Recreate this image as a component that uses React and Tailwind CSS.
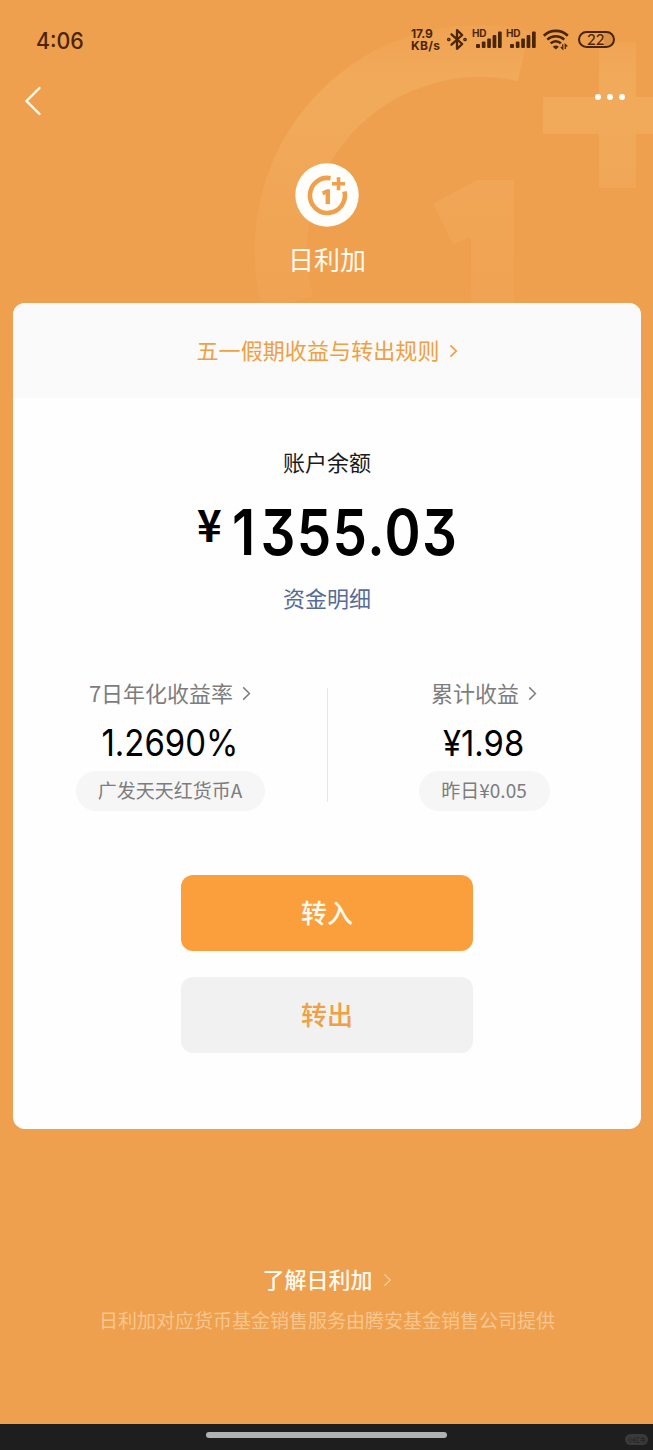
import React from "react";

function Chevron({ className }) {
  return (
    <svg viewBox="0 0 9 16" fill="none" stroke="currentColor" className={className}>
      <path d="M1 1.5L7.6 8L1 14.5" />
    </svg>
  );
}

function Signal() {
  return (
    <div className="relative h-6 w-[30px]">
      <span className="absolute top-[1px] left-[-1px] font-['Inter'] text-[10px] leading-[11px] font-bold tracking-[-0.3px]">
        HD
      </span>
      <svg viewBox="0 0 30 24" className="h-6 w-[30px]" fill="currentColor">
        <rect x="3" y="17" width="4" height="4" rx="1" />
        <rect x="8.8" y="14.5" width="3.7" height="6.5" rx="1" />
        <rect x="14.2" y="11.5" width="3.7" height="9.5" rx="1" />
        <rect x="19.6" y="8" width="3.7" height="13" rx="1" />
        <rect x="25" y="4.5" width="3.7" height="16.5" rx="1" />
      </svg>
    </div>
  );
}

function StatusBar() {
  return (
    <div className="flex h-[51px] items-end justify-between pr-[38px] pl-[36px] text-[#4a2508]">
      <span className="mb-[-3px] origin-left scale-x-[0.95] font-['Inter'] text-[22.5px] leading-[26px] font-medium">
        4:06
      </span>

      <div className="flex h-6 items-center">
        <div className="mt-[2px] w-[36px] font-['Inter'] text-[12px] leading-[12px] font-bold">
          <p className="tracking-[-0.2px]">17.9</p>
          <p className="tracking-[0.3px]">KB/s</p>
        </div>

        {/* Bluetooth */}
        <svg
          viewBox="0 0 20 24"
          className="h-6 w-5"
          fill="none"
          stroke="currentColor"
          strokeWidth="2.3"
          strokeLinejoin="round"
          strokeLinecap="round"
        >
          <path d="M4.5 7.3L15.2 17L10 21.8V3.2L15.2 8L4.5 17.7" />
          <circle cx="1.8" cy="12.5" r="0.7" />
          <circle cx="18" cy="12.5" r="0.7" />
        </svg>

        <div className="ml-[6px] flex gap-[4px]">
          <Signal />
          <Signal />
        </div>

        {/* Wi-Fi */}
        <svg viewBox="0 0 28 24" className="ml-[5px] h-6 w-7" fill="none" stroke="currentColor" strokeWidth="2.6">
          <path d="M1.8 8.7C8.4 2.3 19.2 2.3 25.8 8.7" />
          <path d="M5.3 12.6C10.1 8.1 17.5 8.1 22.3 12.6" />
          <path d="M8.7 16.4C11.6 13.5 16 13.5 18.9 16.4" />
          <path d="M10.7 19.7Q13.8 17.3 16.9 19.7L13.8 22.5Z" fill="currentColor" stroke="none" />
          <path d="M20.8 17.3V22L18.8 20M23.3 22V17.5L25.3 19.5" strokeWidth="1.3" />
        </svg>

        <div className="ml-[8px] flex h-[17px] w-[37px] items-center rounded-full border-2 border-current bg-[linear-gradient(90deg,transparent_72%,#dc9048_72%)] pl-[7px] font-['Lato'] text-[15px] leading-none font-medium">
          22
        </div>
      </div>
    </div>
  );
}

function Watermark() {
  return (
    <svg viewBox="0 0 653 303" className="absolute top-0 left-0 h-[303px] w-[653px]">
      <defs>
        <linearGradient id="fade" x1="0" y1="0" x2="0" y2="303" gradientUnits="userSpaceOnUse">
          <stop offset="0" stopColor="#f3b266" stopOpacity="0" />
          <stop offset="0.25" stopColor="#f3b266" stopOpacity="0.5" />
          <stop offset="0.4" stopColor="#f3b266" stopOpacity="0.5" />
          <stop offset="0.7" stopColor="#f3b266" stopOpacity="0.3" />
          <stop offset="1" stopColor="#f3b266" stopOpacity="0.2" />
        </linearGradient>
      </defs>
      <path
        d="M523.5 55.8A199 199 0 0 0 288 303"
        fill="none"
        stroke="url(#fade)"
        strokeWidth="52"
      />
      <path d="M599 42H636V97H653V134H636V188H599V134H543V97H599Z" fill="url(#fade)" />
      <path d="M477 180H514V303H471V237L453 244L433 204Z" fill="url(#fade)" />
    </svg>
  );
}

function Logo() {
  return (
    <svg viewBox="0 0 64 64" className="h-16 w-16">
      <circle cx="32" cy="32" r="31.7" fill="#fffefa" />
      <g fill="none" stroke="#efa04c">
        <path d="M35.5 15.2A17.5 17.5 0 1 0 49.5 28.6" strokeWidth="4.6" />
        <path d="M43.5 14.3V27.3M37 20.8H50" strokeWidth="3.6" />
      </g>
      <path d="M31.8 26.2H35V41H30.6V31.3L28.2 32.2L27 28.6Z" fill="#efa04c" />
    </svg>
  );
}

function Stat({ label, value, note, valueClass, noteClass }) {
  return (
    <div className="flex w-[314px] flex-col items-center">
      <div className="flex h-[30px] items-center text-[22px] text-[#7d7d7d]">
        <span className="-mt-[2px]">{label}</span>
        <Chevron className="ml-[9px] h-[15px] w-[9px] stroke-[1.6]" />
      </div>
      <p className={`mt-[13px] font-['Inter'] leading-[44px] whitespace-nowrap text-black ${valueClass}`}>{value}</p>
      <span className={`mt-[6px] flex h-10 items-center justify-center rounded-full bg-[#f6f6f6] pb-px text-[19px] text-[#7d7d7d] ${noteClass}`}>
        {note}
      </span>
    </div>
  );
}

function App() {
  return (
    <div className="relative flex h-[1450px] w-[653px] flex-col overflow-hidden bg-[#efa04e] font-['Noto_Sans_CJK_SC',sans-serif]">
      <Watermark />

      <div className="relative flex grow flex-col">
        <StatusBar />

        {/* Nav */}
        <div className="mt-px flex h-[98px] items-center justify-between pr-[28px] pl-[24px] text-[#fffaf0]">
          <svg viewBox="0 0 18 30" className="h-[30px] w-[18px]" fill="none" stroke="currentColor" strokeWidth="2.4" strokeLinecap="round">
            <path d="M15.5 2L2.5 15L15.5 28" />
          </svg>
          <div className="mb-[8px] flex gap-[6px]">
            <span className="h-[6px] w-[6px] rounded-full bg-white" />
            <span className="h-[6px] w-[6px] rounded-full bg-white" />
            <span className="h-[6px] w-[6px] rounded-full bg-white" />
          </div>
        </div>

        {/* Product */}
        <div className="mt-[13px] flex flex-col items-center pl-px">
          <Logo />
          <h1 className="mt-[12px] mb-px text-[26px] leading-[40px] text-[#fffaf0]">日利加</h1>
        </div>

        {/* Card */}
        <div className="mt-[23px] ml-[13px] flex h-[826px] w-[628px] flex-col items-center overflow-hidden rounded-xl bg-[#fefefe]">
          <div className="flex h-[95px] w-full items-center justify-center bg-[#fafafa] text-[22px] text-[#efa044]">
            <span className="-mt-[3px] tracking-[0.1px]">五一假期收益与转出规则</span>
            <Chevron className="ml-[9px] h-[14px] w-[9px] stroke-2" />
          </div>

          <p className="mt-[47px] text-[22px] leading-[32px] text-[#1a1a1a]">账户余额</p>

          <div className="mt-[18px] flex h-[72px] w-[260px] items-start text-black">
            <span className="mt-[8px] w-[35px] shrink-0 text-[44px] leading-[40px] font-bold">
              <span className="block origin-left scale-x-[0.95]">¥</span>
            </span>
            <span className="origin-left scale-x-[0.87] font-['Inter'] text-[63px] leading-[74px] font-semibold tracking-[1.6px] [font-feature-settings:'cv09']">
              <span className="tracking-[6px]">1</span>355.03
            </span>
          </div>

          <p className="mt-[14px] text-[22px] leading-[32px] text-[#576b95]">资金明细</p>

          <div className="mt-[65px] flex items-start">
            <Stat
              label="7日年化收益率"
              value="1.2690%"
              note="广发天天红货币A"
              valueClass="text-[37px] scale-x-[0.89]"
              noteClass="w-[189px]"
            />
            <div className="mt-[10px] -mr-px h-[114px] w-px bg-[#e8e8e8]" />
            <Stat
              label="累计收益"
              value="¥1.98"
              note="昨日¥0.05"
              valueClass="text-[36px] scale-x-[0.91]"
              noteClass="w-[131px]"
            />
          </div>

          <button className="mt-[64px] h-[76px] w-[292px] rounded-xl bg-[#fa9f3b] pb-[4px] text-[26px] font-medium text-[#fffaf0]">
            转入
          </button>
          <button className="mt-[26px] h-[76px] w-[292px] rounded-xl bg-[#f1f1f1] pb-[4px] text-[26px] font-medium text-[#efa044]">
            转出
          </button>
        </div>

        {/* Footer */}
        <div className="mt-[135px] flex flex-col items-center pl-px">
          <div className="flex h-[32px] items-center text-[22px] font-medium text-[#fffaf0]">
            <span className="-mt-[3px]">了解日利加</span>
            <Chevron className="ml-[10px] h-[14px] w-[9px] text-[#f9cf9f] stroke-[1.4]" />
          </div>
          <p className="mt-[10px] text-[19px] leading-[28px] text-[#f7c68f]">
            日利加对应货币基金销售服务由腾安基金销售公司提供
          </p>
        </div>
      </div>

      {/* Gesture bar */}
      <div className="relative flex h-[26px] justify-center bg-[#1e1e1e] pt-[8px]">
        <div className="h-[6px] w-[241px] rounded-full bg-[#b1b1b1]" />
        <span className="absolute right-[5px] bottom-[5px] flex h-[11px] w-[23px] items-center justify-center rounded-full bg-[#3a3a3a] text-[6px] leading-none text-[#1e1e1e]">
          小红书
        </span>
      </div>
    </div>
  );
}

export default App;
